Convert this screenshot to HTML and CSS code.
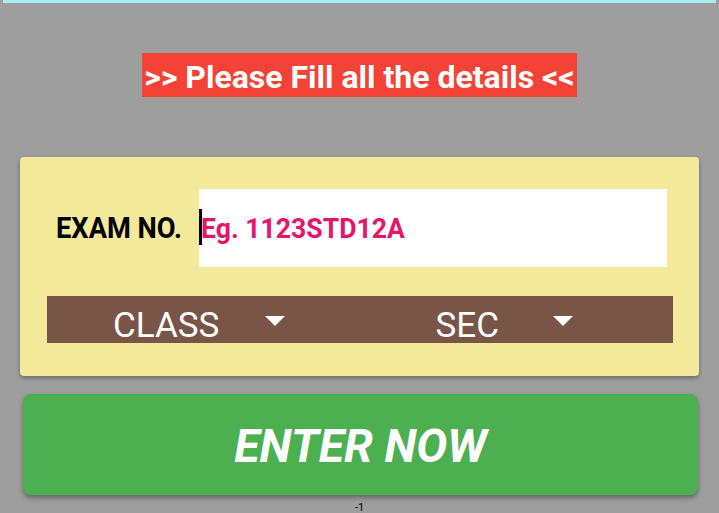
FILE: index.html
```html
<!DOCTYPE html>
<html>
<head>
<meta charset="utf-8">
<link rel="stylesheet" href="styles.css">
</head>
<body>
<div class="topbar"></div>
<div class="banner-wrap"><div class="banner">&gt;&gt; Please Fill all the details &lt;&lt;</div></div>
<div class="card">
  <div class="row">
    <div class="label"><span class="cond label-text">EXAM NO.</span></div>
    <div class="input">
      <span class="cursor"></span>
      <span class="placeholder cond">Eg. 1123STD12A</span>
    </div>
  </div>
  <div class="spinners">
    <div class="spinner spinner-class">
      <span class="spin-text">CLASS</span>
      <span class="tri"></span>
    </div>
    <div class="spinner spinner-sec">
      <span class="spin-text">SEC</span>
      <span class="tri"></span>
    </div>
  </div>
</div>
<div class="button"><span class="btn-text">ENTER NOW</span></div>
<div class="foot">-1</div>
</body>
</html>
```
FILE: styles.css
```css
html, body {
  margin: 0;
  padding: 0;
}
body {
  width: 719px;
  height: 513px;
  overflow: hidden;
  background: #9e9e9e;
  font-family: Roboto, "Liberation Sans", sans-serif;
}
.topbar {
  height: 3px;
  margin: 0 3px;
  background: #a7eeee;
}
.banner-wrap {
  display: flex;
  justify-content: center;
  margin-top: 50px;
}
.banner {
  background: #f44336;
  color: #fff;
  font-weight: 700;
  font-size: 32px;
  height: 44px;
  line-height: 48px;
  padding: 0 2px;
  white-space: nowrap;
}
.card {
  margin: 60px 20px 0 20px;
  height: 219px;
  box-sizing: border-box;
  background: #f3e99b;
  border-radius: 4px;
  box-shadow: 0 2px 4px rgba(0,0,0,0.35);
  padding: 32px 32px 0 27px;
}
.row {
  display: flex;
  align-items: center;
  height: 78px;
}
.label {
  width: 152px;
  padding-left: 9px;
  box-sizing: border-box;
  font-weight: 700;
  font-size: 29px;
  color: #000;
}
.cond {
  display: inline-block;
  transform-origin: left center;
  white-space: nowrap;
}
.label-text {
  transform: scaleX(0.94);
}
.input {
  flex: 1;
  height: 78px;
  background: #fff;
  display: flex;
  align-items: center;
  position: relative;
}
.cursor {
  position: absolute;
  left: 0;
  top: 20px;
  width: 3px;
  height: 36px;
  background: #000;
}
.placeholder {
  color: #e6146b;
  font-weight: 700;
  font-size: 28px;
  margin-left: 2px;
  transform: scaleX(0.95);
}
.spinners {
  display: flex;
  height: 47px;
  margin-top: 29px;
  background: #795548;
  margin-right: -6px;
  color: #fff;
}
.spinner {
  flex: 1;
  display: flex;
  align-items: center;
  position: relative;
}
.spinner-class { padding-left: 66px; }
.spinner-sec { padding-left: 85px; }
.spin-text {
  font-size: 35px;
  line-height: 1;
  margin-top: 11px;
  white-space: nowrap;
}
.tri {
  position: absolute;
  width: 0;
  height: 0;
  border-left: 10.5px solid transparent;
  border-right: 10.5px solid transparent;
  border-top: 10px solid #fff;
  top: 20px;
}
.spinner-class .tri { left: 218px; }
.spinner-sec .tri { left: 202px; }
.button {
  margin: 18px 21px 0 23px;
  height: 101px;
  background: #4caf50;
  border-radius: 8px;
  box-shadow: 0 3px 5px rgba(0,0,0,0.35);
  display: flex;
  align-items: center;
  justify-content: center;
}
.btn-text {
  color: #fff;
  font-weight: 700;
  font-style: italic;
  font-size: 46.5px;
  margin-top: 2px;
  white-space: nowrap;
}
.foot {
  text-align: center;
  font-size: 11px;
  color: #000;
  margin-top: 6px;
}
```
